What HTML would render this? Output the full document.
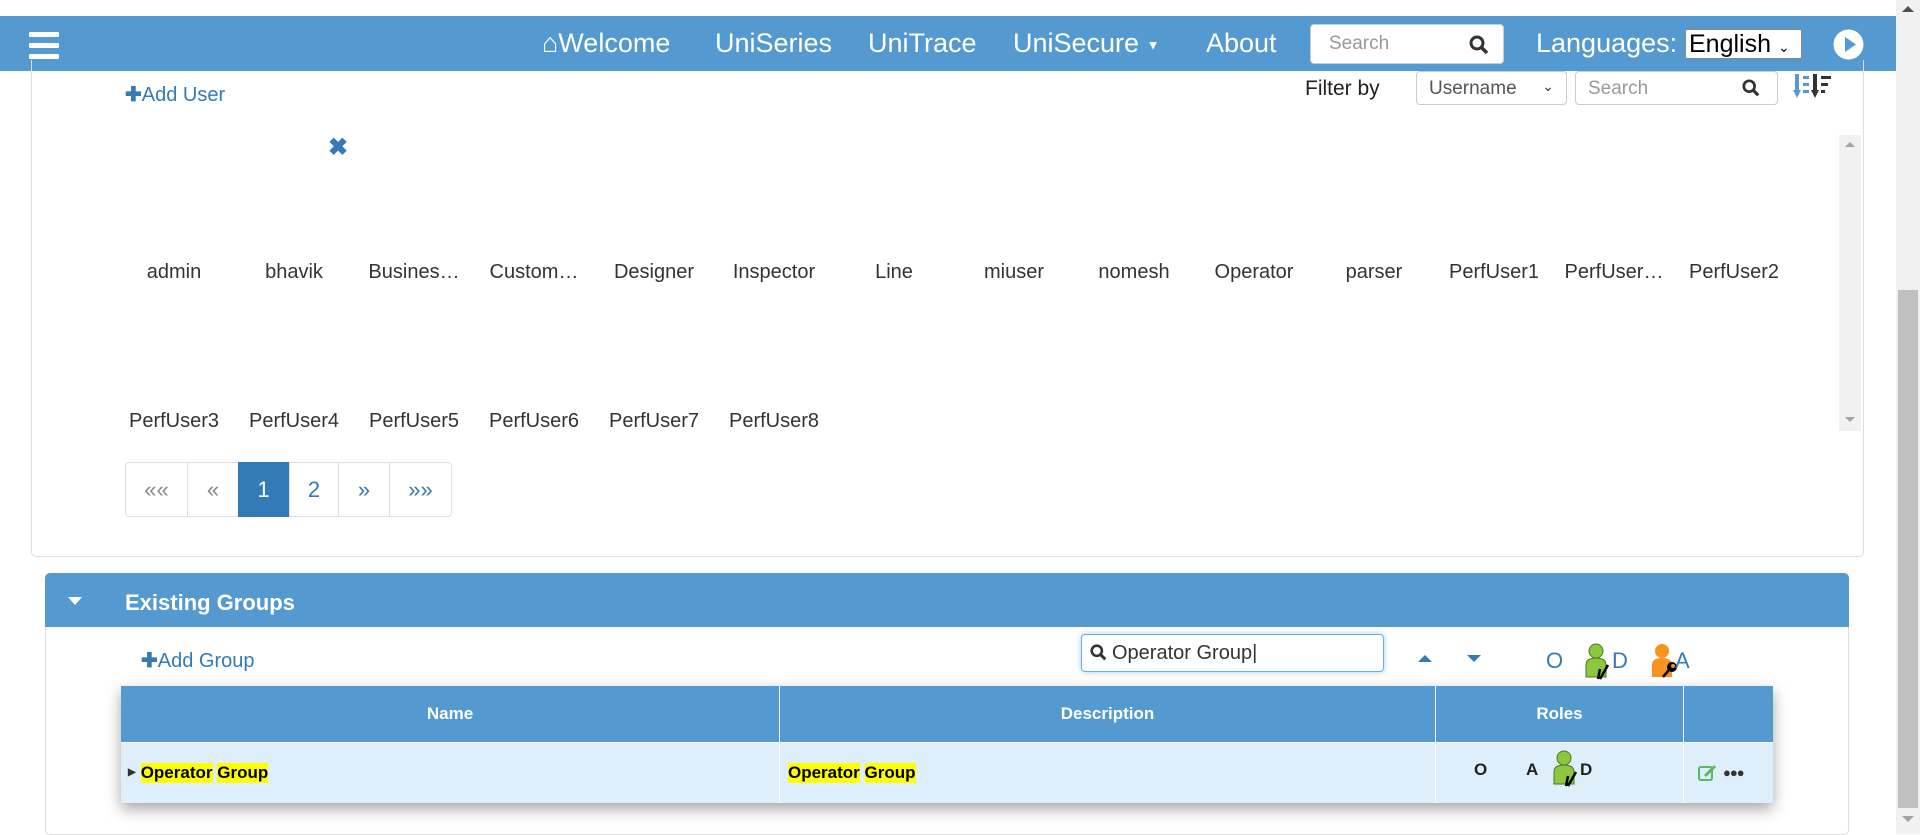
<!DOCTYPE html>
<html><head><meta charset="utf-8"><style>
*{box-sizing:border-box;margin:0;padding:0}
body{width:1920px;height:834px;overflow:hidden;background:#fff;font-family:"Liberation Sans",Arial,sans-serif;position:relative;color:#333}
.a{position:absolute}
.nav{left:0;top:16px;width:1896px;height:55px;background:#5499cf}
.nt{color:#fff;font-size:27px;top:28px;white-space:nowrap}
.ham span{display:block;width:30px;height:5px;background:#fff;margin-bottom:6px;border-radius:1px}
.user{top:261px;width:120px;text-align:center;font-size:20px;color:#333}
.pg{top:462px;height:55px;border:1px solid #ddd;display:flex;align-items:center;justify-content:center;color:#337ab7;font-size:22px}
.th{top:686px;height:56px;color:#fff;font-weight:bold;font-size:17px;display:flex;align-items:center;justify-content:center;border-right:1px solid #fff}
.td{top:742px;height:61px;border-right:1px solid #fff;font-weight:bold;font-size:17px;display:flex;align-items:center}
mark{background:#ff0;color:#000}
</style></head><body>
<div class="a" style="left:1896px;top:0;width:24px;height:834px;background:#f1f1f1"></div>
<div class="a" style="left:1898px;top:290px;width:20px;height:518px;background:#c1c1c1"></div>
<div class="a" style="left:1902px;top:6px;width:0;height:0;border:6px solid transparent;border-bottom-color:#505050;border-top:0"></div>
<div class="a" style="left:1902px;top:816px;width:0;height:0;border:6px solid transparent;border-top-color:#a3a3a3;border-bottom:0"></div>

<div class="a nav"></div>
<div class="a ham" style="left:29px;top:32px"><span></span><span></span><span></span></div>
<div class="a nt" style="left:542px">&#8962;Welcome</div>
<div class="a nt" style="left:715px">UniSeries</div>
<div class="a nt" style="left:868px">UniTrace</div>
<div class="a nt" style="left:1013px">UniSecure <span style="font-size:13px;vertical-align:middle">&#9660;</span></div>
<div class="a nt" style="left:1206px">About</div>
<div class="a" style="left:1310px;top:24px;width:194px;height:40px;background:#fff;border-radius:4px;border:1px solid #ccc"></div>
<div class="a" style="left:1329px;top:33px;font-size:19px;color:#999">Search</div>
<svg class="a" style="left:1469px;top:35px" width="20" height="20" viewBox="0 0 20 20"><circle cx="8" cy="8" r="6" fill="none" stroke="#333" stroke-width="3"/><line x1="12.5" y1="12.5" x2="18" y2="18" stroke="#333" stroke-width="3.5"/></svg>
<div class="a nt" style="left:1536px">Languages:</div>
<div class="a" style="left:1685px;top:29px;width:117px;height:30px;background:#fff;border:1px solid #888;border-radius:2px;font-size:25px;color:#000;padding-left:3px;line-height:28px">English <span style="font-size:14px">&#8964;</span></div>
<svg class="a" style="left:1833px;top:29px" width="31" height="31"><circle cx="15.5" cy="15.5" r="15" fill="#fff"/><path d="M12 8 L23 15.5 L12 23Z" fill="#5499cf"/></svg>

<div class="a" style="left:31px;top:60px;width:1833px;height:497px;border:1px solid #ddd;border-top:none;border-radius:0 0 5px 5px"></div>
<div class="a" style="left:125px;top:82px;font-size:20px;color:#337ab7"><b>&#10010;</b>Add User</div>
<div class="a" style="left:1305px;top:77px;font-size:21px;color:#222">Filter by</div>
<div class="a" style="left:1416px;top:71px;width:151px;height:34px;border:1px solid #ccc;border-radius:4px;font-size:19px;padding:6px 12px;color:#555">Username <span style="float:right;font-size:14px;color:#333">&#8964;</span></div>
<div class="a" style="left:1575px;top:71px;width:203px;height:34px;border:1px solid #ccc;border-radius:4px;font-size:19px;padding:6px 12px;color:#999">Search</div>
<svg class="a" style="left:1742px;top:79px" width="18" height="18" viewBox="0 0 20 20"><circle cx="8" cy="8" r="6" fill="none" stroke="#333" stroke-width="3"/><line x1="12.5" y1="12.5" x2="18" y2="18" stroke="#333" stroke-width="3.5"/></svg>
<svg class="a" style="left:1793px;top:72px" width="48" height="30"><rect x="2" y="2" width="4" height="18" fill="#5499cf"/><path d="M0 18 L4 26 L8 18Z" fill="#5499cf"/><rect x="10" y="4" width="6" height="3" fill="#5499cf"/><rect x="10" y="11" width="6" height="3" fill="#5499cf"/><rect x="10" y="18" width="6" height="3" fill="#5499cf"/><rect x="20" y="2" width="4" height="18" fill="#333"/><path d="M18 18 L22 26 L26 18Z" fill="#333"/><rect x="28" y="4" width="10" height="3" fill="#333"/><rect x="28" y="11" width="7" height="3" fill="#333"/><rect x="28" y="18" width="4" height="3" fill="#333"/></svg>
<div class="a" style="left:1839px;top:135px;width:22px;height:296px;background:#f1f1f1"></div>
<div class="a" style="left:1845px;top:142px;border:5px solid transparent;border-bottom-color:#a3a3a3;border-top:0"></div>
<div class="a" style="left:1845px;top:417px;border:5px solid transparent;border-top-color:#a3a3a3;border-bottom:0"></div>
<div class="a" style="left:328px;top:133px;font-size:24px;color:#337ab7;font-weight:bold">&#10006;</div>

<div class="a user" style="left:114px">admin</div>
<div class="a user" style="left:234px">bhavik</div>
<div class="a user" style="left:354px">Busines…</div>
<div class="a user" style="left:474px">Custom…</div>
<div class="a user" style="left:594px">Designer</div>
<div class="a user" style="left:714px">Inspector</div>
<div class="a user" style="left:834px">Line</div>
<div class="a user" style="left:954px">miuser</div>
<div class="a user" style="left:1074px">nomesh</div>
<div class="a user" style="left:1194px">Operator</div>
<div class="a user" style="left:1314px">parser</div>
<div class="a user" style="left:1434px">PerfUser1</div>
<div class="a user" style="left:1554px">PerfUser…</div>
<div class="a user" style="left:1674px">PerfUser2</div>
<div class="a user" style="left:114px;top:410px">PerfUser3</div>
<div class="a user" style="left:234px;top:410px">PerfUser4</div>
<div class="a user" style="left:354px;top:410px">PerfUser5</div>
<div class="a user" style="left:474px;top:410px">PerfUser6</div>
<div class="a user" style="left:594px;top:410px">PerfUser7</div>
<div class="a user" style="left:714px;top:410px">PerfUser8</div>

<div class="a pg" style="left:125px;width:63px;border-radius:4px 0 0 4px;color:#888">«« </div>
<div class="a pg" style="left:187px;width:52px;color:#888">«</div>
<div class="a pg" style="left:238px;width:51px;background:#337ab7;border-color:#337ab7;color:#fff">1</div>
<div class="a pg" style="left:289px;width:50px">2</div>
<div class="a pg" style="left:338px;width:52px">»</div>
<div class="a pg" style="left:389px;width:63px;border-radius:0 4px 4px 0">»»</div>

<div class="a" style="left:45px;top:573px;width:1804px;height:262px;border:1px solid #ddd;border-radius:5px"></div>
<div class="a" style="left:45px;top:573px;width:1804px;height:54px;background:#5499cf;border-radius:5px 5px 0 0"></div>
<div class="a" style="left:68px;top:597px;border:7px solid transparent;border-top:8px solid #fff;border-bottom:0"></div>
<div class="a" style="left:125px;top:590px;font-size:22px;font-weight:bold;color:#fff">Existing Groups</div>
<div class="a" style="left:141px;top:648px;font-size:20px;color:#337ab7"><b>&#10010;</b>Add Group</div>
<div class="a" style="left:1081px;top:634px;width:303px;height:38px;border:1px solid #66afe9;border-radius:4px;box-shadow:0 0 6px rgba(102,175,233,.6)"></div>
<svg class="a" style="left:1090px;top:644px" width="17" height="17" viewBox="0 0 20 20"><circle cx="8" cy="8" r="6" fill="none" stroke="#333" stroke-width="3"/><line x1="12.5" y1="12.5" x2="18" y2="18" stroke="#333" stroke-width="3.5"/></svg>
<div class="a" style="left:1112px;top:642px;font-size:20px;color:#333">Operator Group|</div>
<div class="a" style="left:1418px;top:655px;border:7px solid transparent;border-bottom:7px solid #337ab7;border-top:0"></div>
<div class="a" style="left:1467px;top:655px;border:7px solid transparent;border-top:7px solid #337ab7;border-bottom:0"></div>
<div class="a" style="left:1546px;top:648px;font-size:22px;color:#337ab7">O</div>
<svg class="a" style="left:1584px;top:643px" width="28" height="38"><circle cx="12" cy="8" r="7" fill="#8dc63f" stroke="#4a7a1a"/><path d="M2 34 V22 Q2 15 12 15 Q22 15 22 22 V34Z" fill="#8dc63f" stroke="#4a7a1a"/><path d="M14 36 L16 26 M16 36 L24 22" stroke="#000" stroke-width="2.5"/></svg>
<div class="a" style="left:1612px;top:648px;font-size:22px;color:#337ab7">D</div>
<svg class="a" style="left:1650px;top:643px" width="34" height="38"><circle cx="12" cy="8" r="7" fill="#f7941d"/><path d="M2 34 V22 Q2 15 12 15 Q22 15 22 22 V34Z" fill="#f7941d"/><circle cx="22" cy="24" r="5" fill="#000"/><circle cx="23" cy="23" r="2" fill="#f7941d"/><path d="M19 27 L13 34" stroke="#000" stroke-width="2.5"/></svg>
<div class="a" style="left:1675px;top:648px;font-size:22px;color:#337ab7">A</div>

<div class="a" style="left:121px;top:686px;width:1652px;height:117px;box-shadow:0 6px 14px rgba(0,0,0,.35);background:#deeefa"></div>
<div class="a" style="left:121px;top:686px;width:1652px;height:56px;background:#5499cf"></div>
<div class="a th" style="left:121px;width:659px">Name</div>
<div class="a th" style="left:780px;width:656px">Description</div>
<div class="a th" style="left:1436px;width:248px">Roles</div>
<div class="a th" style="left:1684px;width:89px;border:0"></div>
<div class="a" style="left:121px;top:742px;width:1652px;height:1px;background:#fff"></div>
<div class="a td" style="left:121px;width:659px;padding-left:7px"><span style="font-size:10px;margin-right:5px">&#9654;</span><mark>Operator</mark>&nbsp;<mark>Group</mark></div>
<div class="a td" style="left:780px;width:656px;padding-left:8px"><mark>Operator</mark>&nbsp;<mark>Group</mark></div>
<div class="a td" style="left:1436px;width:248px;color:#222"><span class="a" style="left:38px;top:18px">O</span><span class="a" style="left:90px;top:18px">A</span>
<svg class="a" style="left:116px;top:8px" width="28" height="38"><circle cx="12" cy="8" r="7" fill="#8dc63f" stroke="#4a7a1a"/><path d="M2 34 V22 Q2 15 12 15 Q22 15 22 22 V34Z" fill="#8dc63f" stroke="#4a7a1a"/><path d="M14 36 L16 26 M16 36 L24 22" stroke="#000" stroke-width="2.5"/></svg><span class="a" style="left:144px;top:18px">D</span></div>
<div class="a td" style="left:1684px;width:89px;border:0;padding-left:14px"><svg width="20" height="18"><rect x="1" y="3" width="13" height="13" rx="2" fill="none" stroke="#5cb85c" stroke-width="2"/><path d="M7 12 L17 2" stroke="#5cb85c" stroke-width="3"/></svg><span style="margin-left:5px;font-size:13px;letter-spacing:-1px">&#9679;&#9679;&#9679;</span></div>
</body></html>
